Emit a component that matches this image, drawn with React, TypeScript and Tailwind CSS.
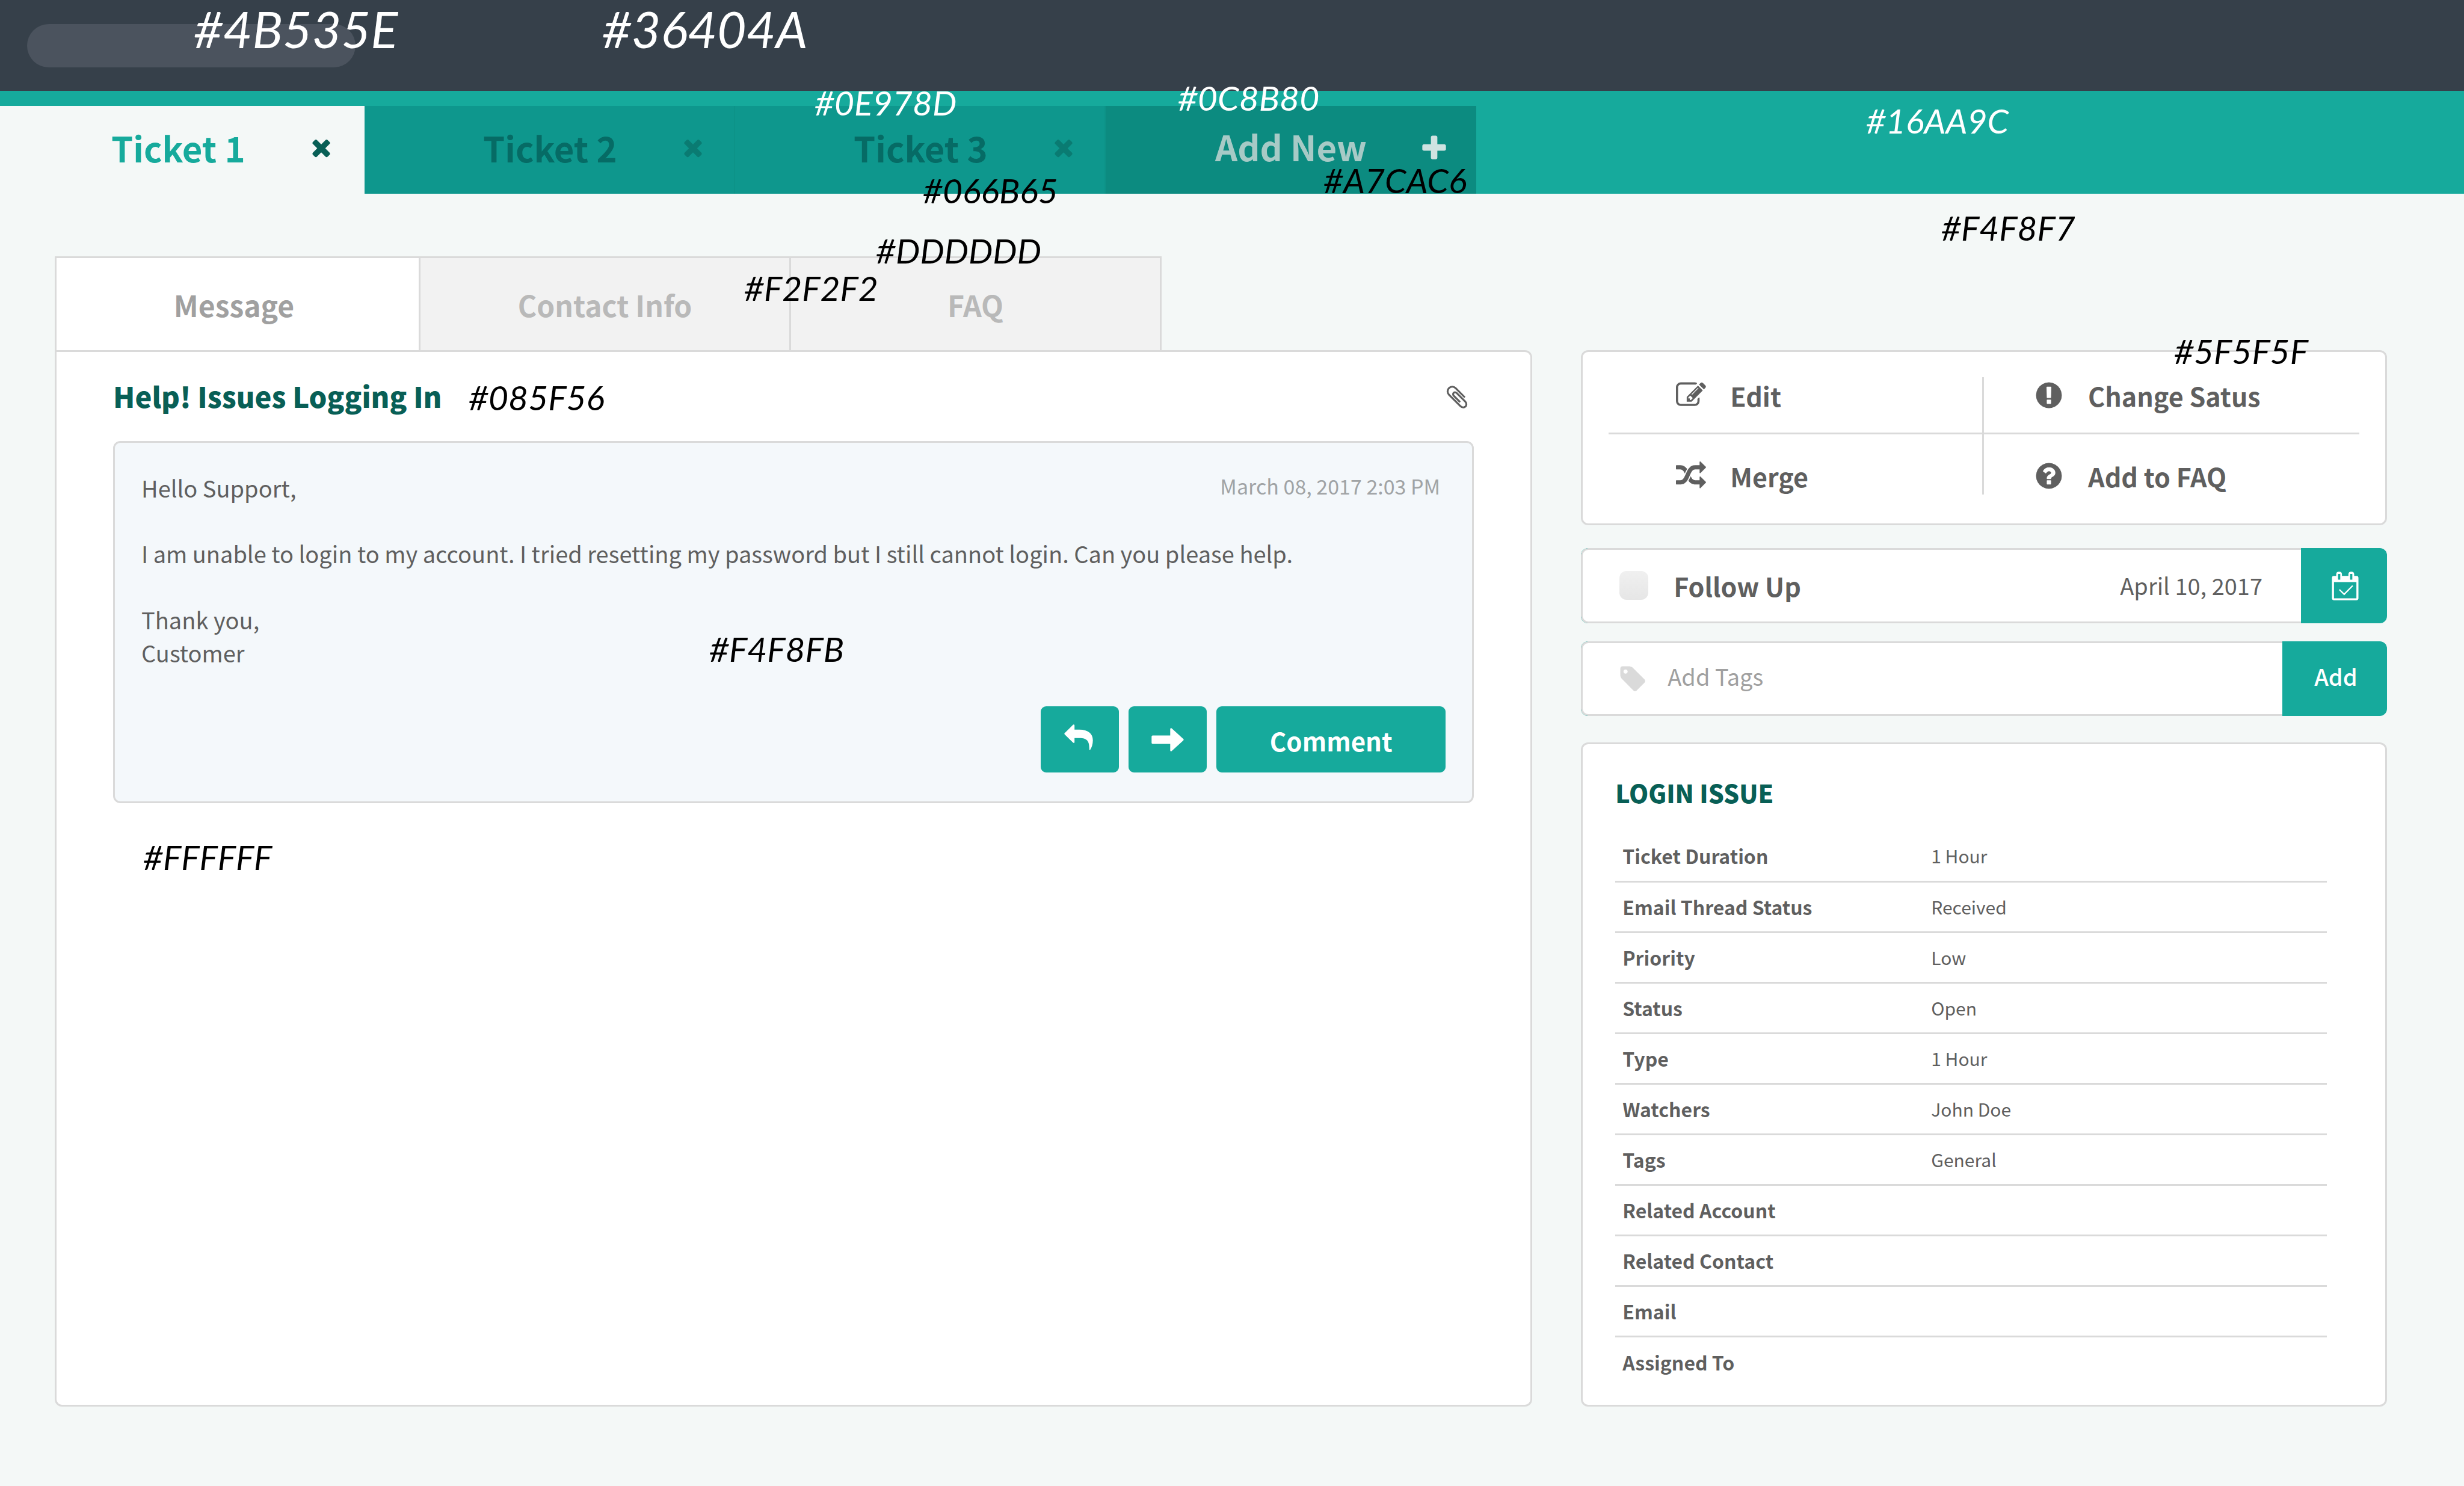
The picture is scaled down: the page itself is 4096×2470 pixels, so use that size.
import type { ReactNode } from "react";

const ICONS = {
  times:
    "M1490 1322q0 40-28 68l-136 136q-28 28-68 28t-68-28l-294-294-294 294q-28 28-68 28t-68-28l-136-136q-28-28-28-68t28-68l294-294-294-294q-28-28-28-68t28-68l136-136q28-28 68-28t68 28l294 294 294-294q28-28 68-28t68 28l136 136q28 28 28 68t-28 68l-294 294 294 294q28 28 28 68z",
  plus: "M1600 736v192q0 40-28 68t-68 28h-416v416q0 40-28 68t-68 28h-192q-40 0-68-28t-28-68v-416h-416q-40 0-68-28t-28-68v-192q0-40 28-68t68-28h416v-416q0-40 28-68t68-28h192q40 0 68 28t28 68v416h416q40 0 68 28t28 68z",
  edit: "M888 1184l116-116-152-152-116 116v56h96v96h56zm440-720q-16-16-33 1l-350 350q-17 17-1 33t33-1l350-350q17-17 1-33zm80 594v190q0 119-84.5 203.5t-203.5 84.5h-832q-119 0-203.5-84.5t-84.5-203.5v-832q0-119 84.5-203.5t203.5-84.5h832q63 0 117 25 15 7 18 23 3 17-9 29l-49 49q-14 14-32 8-23-6-45-6h-832q-66 0-113 47t-47 113v832q0 66 47 113t113 47h832q66 0 113-47t47-113v-126q0-13 9-22l64-64q15-15 35-7t20 29zm-96-738l288 288-672 672h-288v-288zm444 132l-92 92-288-288 92-92q28-28 68-28t68 28l152 152q28 28 28 68t-28 68z",
  merge:
    "M666 481q-60 92-137 273-22-45-37-72.5t-40.5-63.5-51-56.5-63-35-81.5-14.5h-224q-14 0-23-9t-9-23v-192q0-14 9-23t23-9h224q250 0 410 225zm1126 799q0 14-9 23l-320 320q-9 9-23 9-13 0-22.5-9.5t-9.5-22.5v-192q-32 0-85 .5t-81 1-73-1-71-5-64-10.5-63-18.5-58-28.5-59-40-55-53.5-56-69.5q59-93 136-273 22 45 37 72.5t40.5 63.5 51 56.5 63 35 81.5 14.5h256v-192q0-14 9-23t23-9q12 0 24 10l319 319q9 9 9 23zm0-896q0 14-9 23l-320 320q-9 9-23 9-13 0-22.5-9.5t-9.5-22.5v-192h-256q-48 0-87 15t-69 45-51 61.5-45 77.5q-32 62-78 171-29 66-49.5 111t-54 105-64 100-74 83-90 68.5-106.5 42-128 16.5h-224q-14 0-23-9t-9-23v-192q0-14 9-23t23-9h224q48 0 87-15t69-45 51-61.5 45-77.5q32-62 78-171 29-66 49.5-111t54-105 64-100 74-83 90-68.5 106.5-42 128-16.5h256v-192q0-14 9-23t23-9q12 0 24 10l319 319q9 9 9 23z",
  exclamation:
    "M896 128q209 0 385.5 103t279.5 279.5 103 385.5-103 385.5-279.5 279.5-385.5 103-385.5-103-279.5-279.5-103-385.5 103-385.5 279.5-279.5 385.5-103zm128 1247v-190q0-14-9-23.5t-22-9.5h-192q-13 0-23 10t-10 23v190q0 13 10 23t23 10h192q13 0 22-9.5t9-23.5zm-2-344l18-621q0-12-10-18-10-8-24-8h-220q-14 0-24 8-10 6-10 18l17 621q0 10 10 17.5t24 7.5h185q14 0 23.5-7.5t10.5-17.5z",
  question:
    "M1024 1376v-192q0-14-9-23t-23-9h-192q-14 0-23 9t-9 23v192q0 14 9 23t23 9h192q14 0 23-9t9-23zm256-672q0-88-55.5-163t-138.5-116-170-41q-243 0-371 213-15 24 8 42l132 100q7 6 19 6 16 0 25-12 53-68 86-92 34-24 86-24 48 0 85.5 26t37.5 59q0 38-20 61t-68 45q-63 28-115.5 86.5t-52.5 125.5v36q0 14 9 23t23 9h192q14 0 23-9t9-23q0-19 21.5-49.5t54.5-49.5q32-18 49-28.5t46-35 44.5-48 28-60.5 12.5-81zm384 192q0 209-103 385.5t-279.5 279.5-385.5 103-385.5-103-279.5-279.5-103-385.5 103-385.5 279.5-279.5 385.5-103 385.5 103 279.5 279.5 103 385.5z",
  paperclip:
    "M1596 1385q0 117-79 196t-196 79q-135 0-235-100l-777-776q-113-115-113-271 0-159 110-270t269-111q158 0 273 113l605 606q10 10 10 22 0 16-30.5 46.5t-46.5 30.5q-13 0-23-10l-606-607q-79-77-181-77-106 0-179 75t-73 181q0 105 76 181l776 777q63 63 145 63 64 0 106-42t42-106q0-82-63-145l-581-581q-26-24-60-24-29 0-48 19t-19 48q0 32 25 59l410 410q10 10 10 22 0 16-31 47t-47 31q-12 0-22-10l-410-410q-63-61-63-149 0-82 57-139t139-57q88 0 149 63l581 581q100 98 100 235z",
  tag: "M576 448q0-53-37.5-90.5t-90.5-37.5-90.5 37.5-37.5 90.5 37.5 90.5 90.5 37.5 90.5-37.5 37.5-90.5zm1067 576q0 53-37 90l-491 492q-39 37-91 37-53 0-90-37l-715-716q-38-37-64.5-101t-26.5-117v-416q0-52 38-90t90-38h416q53 0 117 26.5t102 64.5l715 714q37 39 37 91z",
};

function Icon({ name, className }: { name: keyof typeof ICONS; className: string }) {
  return (
    <svg viewBox="0 0 1792 1792" fill="currentColor" aria-hidden="true" className={className}>
      <path d={ICONS[name]} />
    </svg>
  );
}

function ReplyIcon() {
  return (
    <svg viewBox="0 0 170 152" fill="currentColor" aria-hidden="true" className="h-[43px] w-12">
      <path d="M3 51 53 2q7-4 8 4v25h28c52 0 80 24 80 63 0 24-7 42-15 55-2 4-6 3-6-2 1-45-10-67-58-67H61v24q-1 8-8 4L3 59q-4-4 0-8z" />
    </svg>
  );
}

function ForwardIcon() {
  return (
    <svg viewBox="0 0 188 136" fill="currentColor" aria-hidden="true" className="h-[39px] w-[54px]">
      <path d="M7 44h102V6q1-8 8-4l68 62q4 4 0 8l-68 62q-7 4-8-4V92H7q-6 0-6-6V50q0-6 6-6z" />
    </svg>
  );
}

function CalendarCheckIcon() {
  return (
    <svg viewBox="0 0 156 170" aria-hidden="true" className="h-12 w-[45px]">
      <path
        fill="currentColor"
        fillRule="evenodd"
        d="M12 26h13V16Q25 1 42 1t17 15v10h38V16q0-15 17-15t17 15v10h13q12 0 12 12v120q0 11-12 11H12q-12 0-12-11V38q0-12 12-12zm0 36v96h132V62zM36 14v34h13V14zm71 0v34h13V14z"
      />
      <path d="m44 106 28 28 50-51" fill="none" stroke="currentColor" strokeWidth="8" />
    </svg>
  );
}

const NOTES = [
  { text: "#4B535E", place: "left-[322px] top-[6px] text-[84px] text-white" },
  { text: "#36404A", place: "left-[1001px] top-[6px] text-[84px] text-white" },
  { text: "#0E978D", place: "left-[1354px] top-[142px] text-[57px] text-white" },
  { text: "#0C8B80", place: "left-[1958px] top-[134px] text-[57px] text-white" },
  { text: "#16AA9C", place: "left-[3102px] top-[172px] text-[57px] text-white" },
  { text: "#066B65", place: "left-[1534px] top-[288px] text-[57px] text-black" },
  { text: "#A7CAC6", place: "left-[2200px] top-[271px] text-[57px] text-black" },
  { text: "#F4F8F7", place: "left-[3227px] top-[350px] text-[57px] text-black" },
  { text: "#DDDDDD", place: "left-[1456px] top-[388px] text-[57px] text-black" },
  { text: "#F2F2F2", place: "left-[1237px] top-[450px] text-[57px] text-black" },
  { text: "#5F5F5F", place: "left-[3614px] top-[555px] text-[57px] text-black" },
  { text: "#085F56", place: "left-[779px] top-[632px] text-[57px] text-black" },
  { text: "#F4F8FB", place: "left-[1179px] top-[1050px] text-[57px] text-black" },
  { text: "#FFFFFF", place: "left-[238px] top-[1396px] text-[57px] text-black" },
];

const DETAILS = [
  ["Ticket Duration", "1 Hour"],
  ["Email Thread Status", "Received"],
  ["Priority", "Low"],
  ["Status", "Open"],
  ["Type", "1 Hour"],
  ["Watchers", "John Doe"],
  ["Tags", "General"],
  ["Related Account", ""],
  ["Related Contact", ""],
  ["Email", ""],
  ["Assigned To", ""],
];

function TicketTab({ label, active = false }: { label: string; active?: boolean }) {
  return (
    <div
      className={
        active
          ? "flex w-[606px] items-center justify-between bg-[#f4f8f7] pr-[50px] pb-2 pl-[185px] text-[#16aa9c]"
          : "flex w-[616px] items-center justify-between border-r-2 border-[#0d9388] bg-[#0e978d] pr-[46px] pb-2 pl-[197px] text-[#066b65]"
      }
    >
      <button type="button" className="text-[58px] leading-[80px] font-bold">
        {label}
      </button>
      <button
        type="button"
        aria-label={"Close " + label}
        className={active ? "text-[#085f56]" : "text-[#0a7b72]"}
      >
        <Icon name="times" className="size-11" />
      </button>
    </div>
  );
}

function SubTab({ children, active = false }: { children: ReactNode; active?: boolean }) {
  return (
    <button
      type="button"
      className={
        active
          ? "w-[605px] border-r-[3px] border-[#dadada] bg-white pr-3 text-[#a0a0a0]"
          : "w-[616px] border-r-[3px] border-[#dadada] bg-[#f2f2f2] text-[#b9b9b9]"
      }
    >
      {children}
    </button>
  );
}

function Action({ icon, children }: { icon: keyof typeof ICONS; children: ReactNode }) {
  return (
    <button type="button" className="flex items-center gap-10 text-left">
      <Icon name={icon} className="size-[50px]" />
      <span>{children}</span>
    </button>
  );
}

export default function App() {
  return (
    <div className="relative min-h-screen bg-[#f4f8f7] font-['Noto_Sans_CJK_SC','Noto_Sans',sans-serif] text-[#5f5f5f]">
      <header className="flex h-[151px] items-center bg-[#36404a] px-[45px]">
        <input
          type="search"
          aria-label="Search"
          className="h-[72px] w-[546px] rounded-full bg-[#4b535e] px-10 text-[38px] text-white outline-none"
        />
      </header>

      <nav aria-label="Tickets" className="flex h-[171px] bg-[#16aa9c] pt-[25px]">
        <TicketTab label="Ticket 1" active />
        <TicketTab label="Ticket 2" />
        <TicketTab label="Ticket 3" />
        <button
          type="button"
          className="flex w-[616px] items-center justify-between bg-[#0c8b80] pr-[45px] pb-1 pl-[182px] text-[58px] leading-[80px] font-bold text-[#a7cac6]"
        >
          <span className="pb-2">Add New</span>
          <Icon name="plus" className="size-[50px] text-[#cfe3e1]" />
        </button>
      </nav>

      <main className="pt-[104px] pr-[128px] pb-[132px] pl-[91px]">
        <nav
          aria-label="Ticket sections"
          className="flex h-[156px] w-fit border-t-[3px] border-l-[3px] border-[#dadada] text-[48px] leading-[70px] font-bold"
        >
          <SubTab active>Message</SubTab>
          <SubTab>Contact Info</SubTab>
          <SubTab>FAQ</SubTab>
        </nav>

        <div className="grid grid-cols-[minmax(0,11fr)_minmax(0,6fr)] gap-[81px]">
          <section className="rounded-[12px] rounded-tl-none border-[3px] border-[#dadada] bg-white px-[94px] pt-[37px]">
            <div className="flex items-center justify-between pr-[6px] pb-[39px]">
              <h1 className="text-[47px] leading-[72px] font-black text-[#085f56]">Help! Issues Logging In</h1>
              <button type="button" aria-label="Attach file" className="pt-1">
                <Icon name="paperclip" className="size-[44px]" />
              </button>
            </div>

            <article className="rounded-[12px] border-[3px] border-[#dadada] bg-[#f4f8fb] px-[44px] pt-[47px] pb-12">
              <div className="flex justify-between text-[38px] leading-[55px]">
                <p>Hello Support,</p>
                <time dateTime="2017-03-08T14:03" className="pr-[9px] text-[34px] leading-[50px] text-[#a0a3a5]">
                  March 08, 2017 2:03 PM
                </time>
              </div>
              <div className="text-[38px] leading-[55px]">
                <p className="pt-[54px]">
                  I am unable to login to my account. I tried resetting my password but I still cannot login. Can you
                  please help.
                </p>
                <p className="pt-[55px]">
                  Thank you,
                  <br />
                  Customer
                </p>
              </div>
              <div className="flex items-center justify-end gap-4 pt-[62px] text-white">
                <button
                  type="button"
                  aria-label="Reply"
                  className="flex h-[110px] w-[130px] items-center justify-center rounded-[9px] bg-[#16aa9c] pr-1 pb-2"
                >
                  <ReplyIcon />
                </button>
                <button
                  type="button"
                  aria-label="Forward"
                  className="flex h-[110px] w-[130px] items-center justify-center rounded-[9px] bg-[#16aa9c]"
                >
                  <ForwardIcon />
                </button>
                <button
                  type="button"
                  className="h-[110px] w-[381px] rounded-[9px] bg-[#16aa9c] pt-1 text-[42px] leading-[60px] font-bold"
                >
                  Comment
                </button>
              </div>
            </article>
          </section>

          <div className="flex flex-col">
            <section
              aria-label="Actions"
              className="h-[291px] rounded-[12px] border-[3px] border-[#dadada] bg-white px-[43px] pt-[42px] text-[43px] leading-[64px] font-bold"
            >
              <div className="grid grid-cols-2">
                <div className="flex h-[95px] border-r-[3px] border-b-[3px] border-[#dadada] pb-[32px] pl-[112px]">
                  <Action icon="edit">Edit</Action>
                </div>
                <div className="flex h-[95px] border-b-[3px] border-[#dadada] pb-[32px] pl-[83px]">
                  <Action icon="exclamation">Change Satus</Action>
                </div>
                <div className="flex h-[100px] border-r-[3px] border-[#dadada] pt-[38px] pl-[112px]">
                  <Action icon="merge">Merge</Action>
                </div>
                <div className="flex h-[100px] pt-[38px] pl-[83px]">
                  <Action icon="question">Add to FAQ</Action>
                </div>
              </div>
            </section>

            <section
              aria-label="Follow up"
              className="mt-[38px] flex h-[125px] overflow-hidden rounded-[12px] bg-[#16aa9c]"
            >
              <div className="flex flex-1 items-center justify-between rounded-l-[12px] border-[3px] border-r-0 border-[#dadada] bg-white pr-[64px] pb-[2px] pl-[61px]">
                <label className="flex items-center gap-[42px] text-[43px] leading-[64px] font-bold">
                  <input
                    type="checkbox"
                    className="size-12 appearance-none rounded-[12px] bg-linear-to-b from-[#f0f0f0] to-[#e6e6e6]"
                  />
                  Follow Up
                </label>
                <time dateTime="2017-04-10" className="text-[38px] leading-[56px]">
                  April 10, 2017
                </time>
              </div>
              <button
                type="button"
                aria-label="Choose date"
                className="flex w-[143px] items-center justify-center pl-1 text-white"
              >
                <CalendarCheckIcon />
              </button>
            </section>

            <form
              className="mt-[30px] flex h-[124px] overflow-hidden rounded-[12px] bg-[#16aa9c]"
              onSubmit={(event) => event.preventDefault()}
            >
              <label className="flex flex-1 items-center gap-[33px] rounded-l-[12px] border-[3px] border-r-0 border-[#dadada] bg-white pl-[59px]">
                <Icon name="tag" className="size-[49px] text-[#dadada]" />
                <input
                  type="text"
                  aria-label="Add tags"
                  placeholder="Add Tags"
                  className="min-w-0 flex-1 pb-2 text-[38px] leading-[56px] outline-none placeholder:text-[#a0a0a0] placeholder:opacity-100"
                />
              </label>
              <button type="submit" className="w-[174px] pb-2 pl-1 text-[38px] leading-[56px] font-medium text-white">
                Add
              </button>
            </form>

            <section className="mt-[44px] rounded-[12px] border-[3px] border-[#dadada] bg-white pt-[48px] pr-[97px] pb-[30px] pl-[54px]">
              <h2 className="text-[41px] leading-[64px] font-black text-[#085f56]">LOGIN ISSUE</h2>
              <table className="mt-[32px] w-full text-left">
                <tbody>
                  {DETAILS.map(([label, value]) => (
                    <tr key={label} className="h-[84px] border-b-[3px] border-[#dadada] last:border-b-0">
                      <th scope="row" className="w-[525px] pl-3 text-[32px] leading-[48px] font-bold">
                        {label}
                      </th>
                      <td className="text-[30px] leading-[44px]">{value}</td>
                    </tr>
                  ))}
                </tbody>
              </table>
            </section>
          </div>
        </div>
      </main>

      {NOTES.map((note) => (
        <span
          key={note.text}
          className={"pointer-events-none absolute font-['Lato',sans-serif] leading-none font-normal italic " + note.place}
        >
          {note.text}
        </span>
      ))}
    </div>
  );
}
